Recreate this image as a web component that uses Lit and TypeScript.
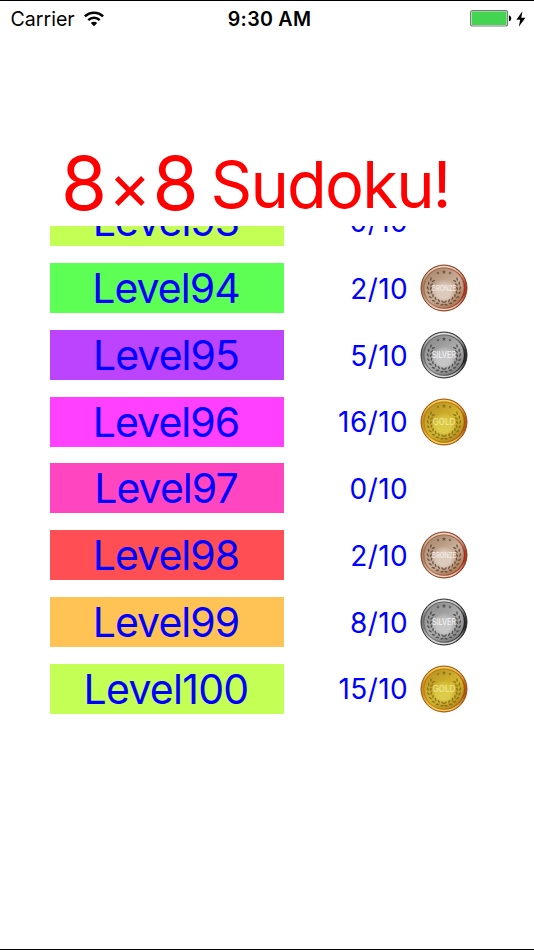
import { LitElement, html, css, svg, nothing } from "lit";
import { customElement, property } from "lit/decorators.js";
import { classMap } from "lit/directives/class-map.js";

type MedalKind = "bronze" | "silver" | "gold";

interface Level {
  n: number;
  color: string;
  score: string;
  medal?: MedalKind;
}

const LEVELS: Level[] = [
  { n: 93, color: "#c4ff55", score: "0/10" },
  { n: 94, color: "#5eff55", score: "2/10", medal: "bronze" },
  { n: 95, color: "#bc44ff", score: "5/10", medal: "silver" },
  { n: 96, color: "#ff40ff", score: "16/10", medal: "gold" },
  { n: 97, color: "#ff45bf", score: "0/10" },
  { n: 98, color: "#ff4f55", score: "2/10", medal: "bronze" },
  { n: 99, color: "#ffc255", score: "8/10", medal: "silver" },
  { n: 100, color: "#c4ff55", score: "15/10", medal: "gold" },
];

const PALETTE = {
  bronze: { rim: ["#9c6a44", "#b98468", "#9c1f0c"], face: ["#a68468", "#c9af9a", "#a8744f"], leaf: "#5c4634", edge: "#84401f", text: "#f8efe9", glow: "#dccbbd", shine: "#f0d8ca" },
  silver: { rim: ["#5a5a5a", "#9c9c9c", "#0c0c0c"], face: ["#868686", "#adadad", "#7c7c7c"], leaf: "#404040", edge: "#303030", text: "#f4f4f4", glow: "#c6c6c6", shine: "#dddddd" },
  gold: { rim: ["#c07c14", "#d89a20", "#a04408"], face: ["#b88f20", "#d3b62e", "#b58a1c"], leaf: "#7c6a1c", edge: "#a05010", text: "#f3e89a", glow: "#dccb48", shine: "#f2d65c" },
};

const LEAVES = [0, 1, 2, 3, 4, 5, 6, 7].map((i) => {
  const deg = 100 + i * 17;
  const a = (deg * Math.PI) / 180;
  return { x: 24 + 14.6 * Math.cos(a), y: 24.6 + 14.6 * Math.sin(a), deg };
});

@customElement("medal-icon")
class MedalIcon extends LitElement {
  @property() kind: MedalKind = "gold";

  static styles = css`
    :host { display: block; width: 48px; height: 48px; }
    svg { display: block; }
    .name { font-family: Inter, "Liberation Sans", sans-serif; font-weight: 400; }
  `;

  render() {
    const p = PALETTE[this.kind];
    const half = LEAVES.map(
      (l) => svg`<g transform="translate(${l.x} ${l.y}) rotate(${l.deg})">
        <ellipse cx="1.8" cy="0" rx=".8" ry="1.8" transform="rotate(-28)"></ellipse>
        <ellipse cx="-1.8" cy="0" rx=".8" ry="1.8" transform="rotate(28)"></ellipse>
      </g>`
    );
    const star = "M0-2.3 .6-.7 2.2-.7 .9.3 1.4 1.9 0 .9-1.4 1.9-.9.3-2.2-.7-.6-.7Z";
    return html`<svg width="48" height="48" viewBox="0 0 48 48">
      <defs>
        <linearGradient id="rim" x1="0" y1=".2" x2="1" y2=".5">
          <stop offset="0" stop-color=${p.rim[0]}></stop>
          <stop offset=".4" stop-color=${p.rim[1]}></stop>
          <stop offset="1" stop-color=${p.rim[2]}></stop>
        </linearGradient>
        <linearGradient id="shine" x1="0" y1="0" x2="0" y2="1">
          <stop offset="0" stop-color=${p.shine}></stop>
          <stop offset=".4" stop-color=${p.shine} stop-opacity=".15"></stop>
          <stop offset=".65" stop-color=${p.shine} stop-opacity=".15"></stop>
          <stop offset="1" stop-color=${p.shine}></stop>
        </linearGradient>
        <linearGradient id="face" x1=".1" y1="0" x2=".8" y2="1">
          <stop offset="0" stop-color=${p.face[0]}></stop>
          <stop offset=".55" stop-color=${p.face[1]}></stop>
          <stop offset="1" stop-color=${p.face[2]}></stop>
        </linearGradient>
        <radialGradient id="glow">
          <stop offset=".5" stop-color=${p.glow}></stop>
          <stop offset="1" stop-color=${p.glow} stop-opacity="0"></stop>
        </radialGradient>
      </defs>
      <circle cx="24" cy="24" r="23" fill="url(#rim)" stroke=${p.edge} stroke-width="1"></circle>
      <circle cx="24" cy="24" r="21.5" fill="none" stroke="url(#shine)" stroke-width="1.5"></circle>
      <circle cx="24" cy="24" r="20" fill="url(#face)" stroke=${p.edge} stroke-opacity=".45" stroke-width=".8"></circle>
      <circle cx="24" cy="28" r="13" fill="url(#glow)"></circle>
      <g fill=${p.leaf} opacity=".8">
        <g>${half}</g>
        <g transform="translate(48 0) scale(-1 1)">${half}</g>
        <path d=${star} transform="translate(24 8)"></path>
        <path d=${star} transform="translate(18 9) scale(.75)"></path>
        <path d=${star} transform="translate(30 9) scale(.75)"></path>
      </g>
      <text class="name" x="24" y="26.8" text-anchor="middle" font-size=${this.kind === "bronze" ? 8 : 9}
        textLength=${this.kind === "gold" ? 22.5 : 24} lengthAdjust="spacingAndGlyphs" fill=${p.text}>${this.kind.toUpperCase()}</text>
    </svg>`;
  }
}

@customElement("status-bar")
class StatusBar extends LitElement {
  static styles = css`
    :host { display: grid; grid-template-columns: 1fr auto 1fr; align-items: center; height: 35px; padding: 0 8px 0 10.5px; font-size: 19.6px; color: #000; }
    .left, .right { display: flex; align-items: center; }
    .left { gap: 9.5px; }
    .right { justify-content: flex-end; gap: 4px; }
    .time { font-weight: 600; letter-spacing: 0.3px; padding-left: 2.6px; }
    svg { display: block; }
  `;

  render() {
    return html`
      <div class="left">
        <span>Carrier</span>
        <svg width="20" height="16" viewBox="0 0 20 16">
          <g fill="none" stroke="#000" stroke-width="2.5">
            <path d="M.9 5.4a13 13 0 0 1 18.2 0"></path>
            <path d="M4.3 9.1a8.1 8.1 0 0 1 11.4 0"></path>
          </g>
          <path d="M10 15.3 6.8 12a4.5 4.5 0 0 1 6.4 0Z"></path>
        </svg>
      </div>
      <span class="time">9:30 AM</span>
      <div class="right">
        <svg width="42" height="17" viewBox="0 0 42 17">
          <rect x=".6" y=".6" width="37" height="15.4" rx="2" fill="#fff" stroke="#777" stroke-width="1.1"></rect>
          <rect x="1.6" y="1.6" width="35" height="13.4" rx=".8" fill="#43d551"></rect>
          <path d="M39 5.6c1.5.3 2.2 1.3 2.2 2.8s-.7 2.5-2.2 2.8Z"></path>
        </svg>
        <svg width="10" height="16" viewBox="0 0 10 16"><path d="M6.4.2.4 8.8h3.8L2.8 15.8 9.4 6.7H5.3Z"></path></svg>
      </div>`;
  }
}

@customElement("app-root")
class AppRoot extends LitElement {
  static styles = css`
    :host { display: flex; flex-direction: column; box-sizing: border-box; width: 534px; height: 950px; overflow: hidden; background: #fff;
      border-top: 1px solid #000; border-bottom: 1px solid #000; font-family: Inter, "Liberation Sans", sans-serif; font-feature-settings: "calt" 0; }
    .title { display: flex; align-items: baseline; height: 76px; margin: 114.3px 0 0 61px; line-height: 66px; color: #f00; white-space: nowrap; }
    .size { font-size: 74.5px; line-height: 66px; display: flex; align-items: baseline; }
    .times { font-size: 65px; margin: 0 1.2px; }
    .word { font-size: 65px; line-height: 62px; margin-left: 12px; letter-spacing: -1.8px; transform: translateY(-2.3px); }
    .list { height: 530px; overflow: hidden; margin-left: 50px; width: 420px; color: #00f; }
    .rows { display: grid; grid-auto-rows: 50px; row-gap: 16.75px; margin-top: -30px; }
    .row { display: grid; grid-template-columns: 234px 124px 48px; align-items: center; }
    .level { box-sizing: border-box; height: 50px; padding-right: 2px; line-height: 50px; text-align: center; font-size: 41px; letter-spacing: -0.95px; }
    .hundred { letter-spacing: -0.75px; }
    .score { padding-top: 1.5px; text-align: right; font-size: 28px; letter-spacing: 0.4px; }
    .medal { margin-left: 12px; }
  `;

  render() {
    return html`
      <status-bar></status-bar>
      <div class="title">
        <span class="size">8<span class="times">×</span>8</span>
        <span class="word">Sudoku!</span>
      </div>
      <div class="list">
        <div class="rows">
          ${LEVELS.map(
            (l) => html`<div class="row">
              <div class=${classMap({ level: true, hundred: l.n === 100 })} style="background:${l.color}">Level${l.n}</div>
              <div class="score">${l.score}</div>
              ${l.medal ? html`<medal-icon class="medal" .kind=${l.medal}></medal-icon>` : nothing}
            </div>`
          )}
        </div>
      </div>`;
  }
}
